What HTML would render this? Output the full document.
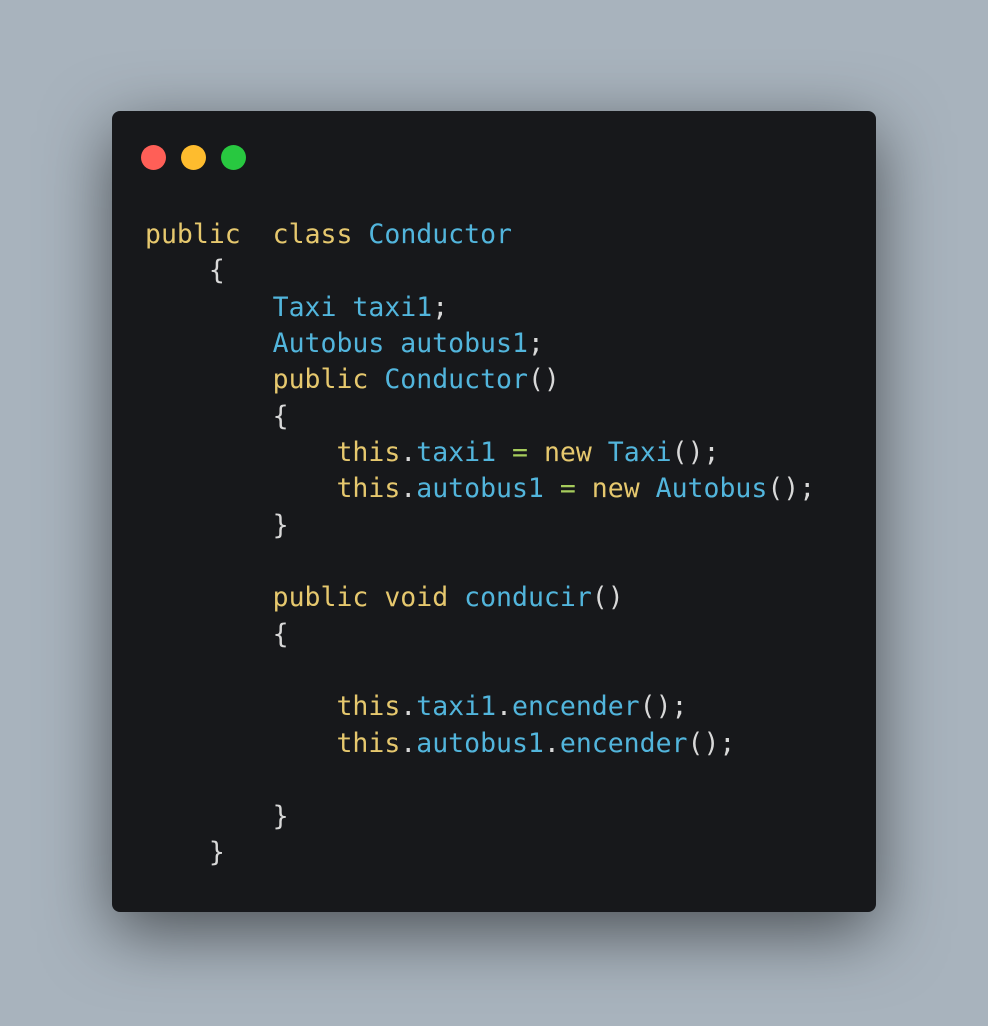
<!DOCTYPE html>
<html><head><style>
html,body{margin:0;padding:0}
body{width:988px;height:1026px;background:#a8b3bd;position:relative;overflow:hidden}
.win{position:absolute;left:112px;top:111px;width:764px;height:801px;background:#17181b;border-radius:8px;box-shadow:0 20px 68px rgba(0,0,0,.55)}
.dot{position:absolute;top:34px;width:25px;height:25px;border-radius:50%}
pre{position:absolute;left:33px;top:106px;margin:0;font-family:"DejaVu Sans Mono","Liberation Mono",monospace;font-size:26.5px;line-height:36.35px;color:#d8d8d8}
.k{color:#e6c86e}.t{color:#52b5dc}.o{color:#a6cc5c}
</style></head><body>
<div class="win">
<div class="dot" style="left:29px;background:#ff5f57"></div>
<div class="dot" style="left:69px;background:#febc2e"></div>
<div class="dot" style="left:109px;background:#28c840"></div>
<pre><span class="k">public</span>  <span class="k">class</span> <span class="t">Conductor</span>
    {
        <span class="t">Taxi taxi1</span>;
        <span class="t">Autobus autobus1</span>;
        <span class="k">public</span> <span class="t">Conductor</span>()
        {
            <span class="k">this</span>.<span class="t">taxi1</span> <span class="o">=</span> <span class="k">new</span> <span class="t">Taxi</span>();
            <span class="k">this</span>.<span class="t">autobus1</span> <span class="o">=</span> <span class="k">new</span> <span class="t">Autobus</span>();
        }

        <span class="k">public</span> <span class="k">void</span> <span class="t">conducir</span>()
        {

            <span class="k">this</span>.<span class="t">taxi1</span>.<span class="t">encender</span>();
            <span class="k">this</span>.<span class="t">autobus1</span>.<span class="t">encender</span>();

        }
    }</pre>
</div>
</body></html>
